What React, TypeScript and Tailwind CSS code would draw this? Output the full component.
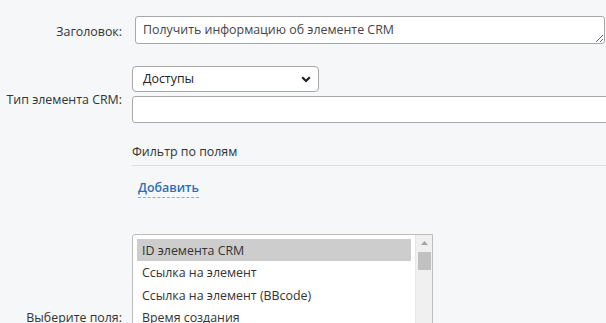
import { useState } from 'react';

const fields = [
  'ID элемента CRM',
  'Ссылка на элемент',
  'Ссылка на элемент (BBcode)',
  'Время создания',
  'Время изменения',
];

function FieldList() {
  const [selected, setSelected] = useState(0);

  return (
    <div className="flex w-[301px] h-[120px] bg-white border border-[#bdbdbd] rounded-tl-[3px] overflow-hidden">
      {/* Options */}
      <div className="flex-1 pt-[4px] pl-[4px] pr-[4px]">
        {fields.map((f, i) => (
          <div
            key={f}
            onClick={() => setSelected(i)}
            className={`h-[22.5px] leading-[23px] pl-[5px] text-[#333] whitespace-nowrap ${
              i === selected ? 'bg-[#cdcdcd]' : ''
            }`}
          >
            {f}
          </div>
        ))}
      </div>

      {/* Scrollbar */}
      <div className="w-[17px] bg-[#f0f0f0] border-l border-[#e6e6e6] flex flex-col items-center">
        <div className="h-[17px] flex items-center justify-center">
          <svg width="7" height="4" viewBox="0 0 7 4">
            <path d="M0 4 L3.5 0 L7 4 Z" fill="#a3a3a3" />
          </svg>
        </div>
        <div className="w-[13px] h-[18px] bg-[#c1c1c1]" />
      </div>
    </div>
  );
}

export default function App() {
  const [title, setTitle] = useState('Получить информацию об элементе CRM');

  return (
    <div
      className="h-[323px] w-[606px] overflow-hidden bg-[#f5f7f8] text-[12.4px] text-[#333]"
      style={{ fontFamily: '"Open Sans", "Noto Sans", sans-serif' }}
    >
      <div className="pt-[16px]">
        {/* Title */}
        <div className="flex">
          <div className="w-[122px] shrink-0 whitespace-nowrap text-right pt-[7px] leading-[18px]">Заголовок:</div>
          <textarea
            value={title}
            onChange={(e) => setTitle(e.target.value)}
            className="ml-[13px] w-[470px] shrink-0 h-[28px] bg-white border border-[#a8a8a8] rounded-[3px] px-[7px] pt-[4px] leading-[18px] text-[#444] outline-none"
          />
        </div>

        {/* CRM element type */}
        <div className="flex mt-[22px]">
          <div className="w-[122px] shrink-0 whitespace-nowrap text-right pt-[25px] leading-[18px]">Тип элемента CRM:</div>
          <div className="ml-[10px] shrink-0 flex flex-col">
            <div className="w-[187px] h-[26px] bg-white border border-[#a8a8a8] rounded-[4px] flex items-center justify-between pl-[10px] pr-[7px]">
              <span className="text-[#222]">Доступы</span>
              <svg width="10" height="7" viewBox="0 0 10 7">
                <path d="M1.2 1.2 L5 5 L8.8 1.2" stroke="#222" strokeWidth="2.2" fill="none" />
              </svg>
            </div>
            <div className="mt-[4px] w-[490px] h-[27px] bg-white border border-[#a8a8a8] rounded-l-[3px]" />
          </div>
        </div>

        {/* Filter */}
        <div className="ml-[132px] mt-[20px]">
          <div className="border-b border-[#dcdcdc] pb-[4px] leading-[18px]">Фильтр по полям</div>
          <div className="mt-[13px] ml-[6px]">
            <span className="font-semibold text-[#2c6fb7] border-b border-dashed border-[#9aa8b8] pb-[1px] leading-[18px]">
              Добавить
            </span>
          </div>
        </div>

        {/* Fields */}
        <div className="flex mt-[36px]">
          <div className="w-[122px] shrink-0 whitespace-nowrap text-right pt-[75px] leading-[18px]">Выберите поля:</div>
          <div className="ml-[10px] shrink-0">
            <FieldList />
          </div>
        </div>
      </div>
    </div>
  );
}
